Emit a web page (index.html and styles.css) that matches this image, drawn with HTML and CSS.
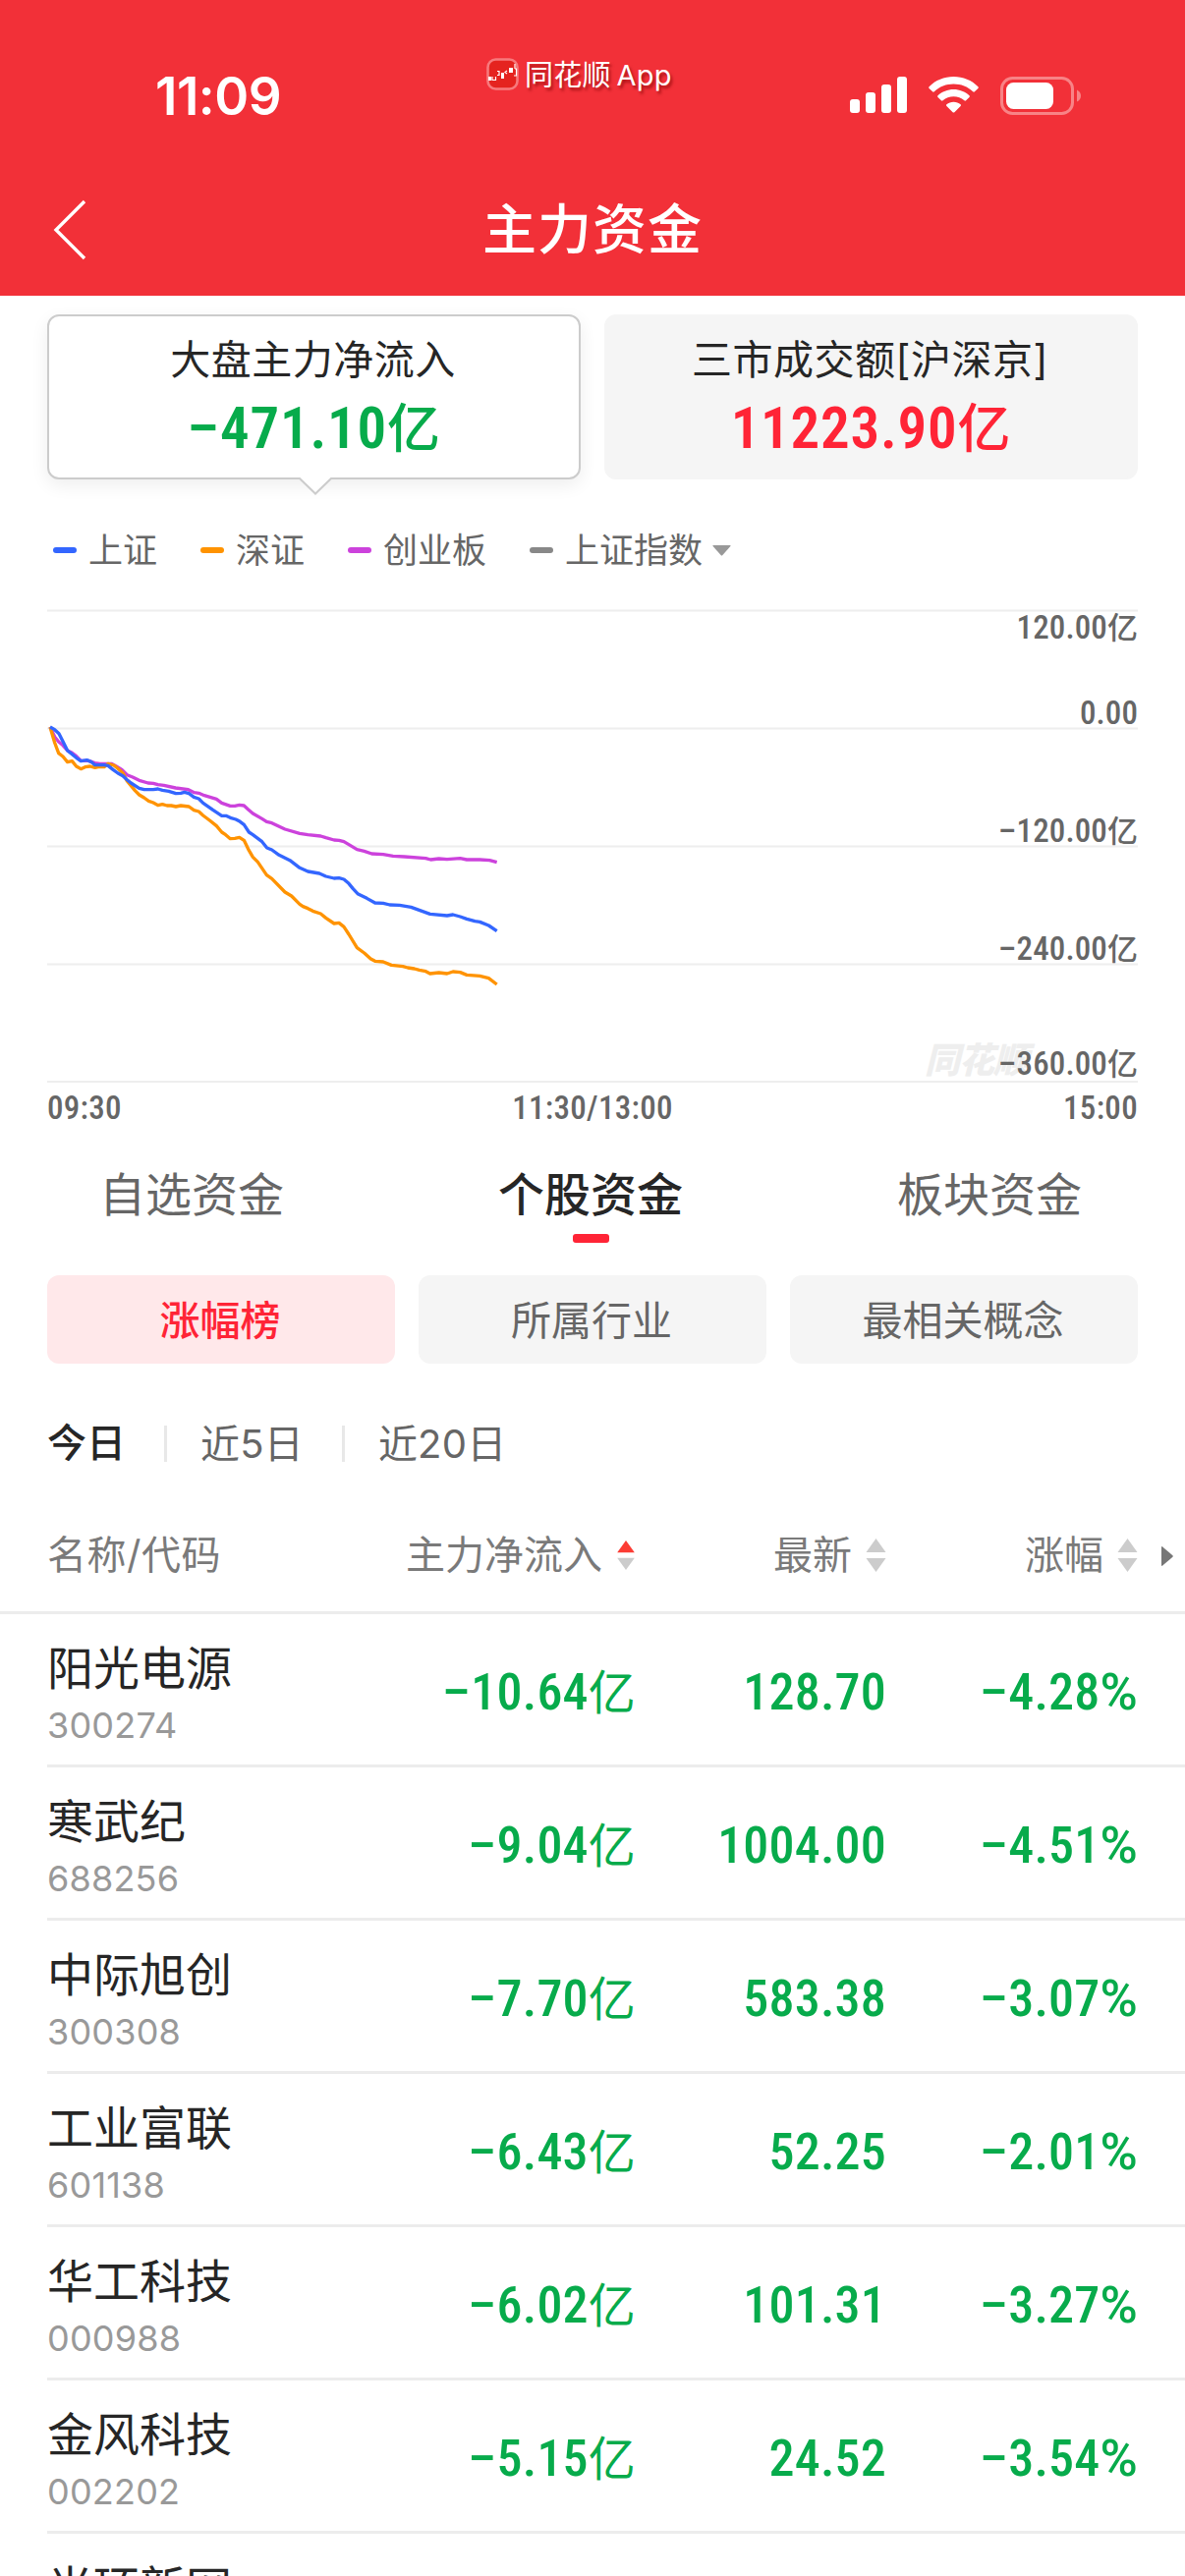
FILE: index.html
```html
<!DOCTYPE html>
<html lang="zh-CN">
<head>
  <meta charset="UTF-8">
  <meta name="viewport" content="width=device-width, initial-scale=1">
  <title>主力资金</title>
  <link rel="stylesheet" href="styles.css">
</head>
<body>
<header class="header">
  <div class="status">
    <span class="time">11:09</span>
    <div class="app-tag">
      <svg width="33" height="33" viewBox="0 0 33 33">
        <rect x="1.5" y="1.5" width="30" height="30" rx="8" fill="#e5231f" stroke="#f7797c" stroke-width="2.6"/>
        <path d="M2 19h3v4H2zM15 15h3v6h-3zM23 10h4v5h-4z" fill="#fff"/>
        <path d="M6 19v3.500h3.500v-3.500M11 13.500h2v4h-2M21 13l-2 1.500 2 1.500M29 6v5M29 11h1.500v7H28" fill="none" stroke="#fff" stroke-width="1.200"/>
      </svg>
      <span>同花顺<i>App</i></span>
    </div>
    <div class="status-icons">
      <svg width="58" height="38" viewBox="0 0 58 38" fill="#fff">
        <rect x="0" y="23" width="10" height="14" rx="3"/>
        <rect x="16" y="16" width="10" height="21" rx="3"/>
        <rect x="32" y="8" width="10" height="29" rx="3"/>
        <rect x="48" y="0" width="10" height="37" rx="3"/>
      </svg>
      <svg class="wifi" width="51" height="38" viewBox="0 0 51 38" fill="#fff">
        <path d="M25.500 0C16 0 7 3.700.600 10.200q-.8.900 0 1.700l3.500 3.400q.8.800 1.700 0C11 10.200 18 7.500 25.500 7.500s14.500 2.700 19.700 7.800q.9.800 1.700 0l3.500-3.400q.8-.8 0-1.700C44 3.700 35 0 25.500 0z"/>
        <path d="M25.500 13c-6 0-11.700 2.300-16 6.200q-.9.800 0 1.700l3.400 3.400q.9.800 1.700 0c3-2.600 6.800-4.100 10.900-4.100s7.900 1.500 10.900 4.100q.8.800 1.700 0l3.400-3.400q.9-.9 0-1.700c-4.300-3.900-10-6.200-16-6.200z"/>
        <path d="M25.500 25.700c-2.700 0-5.200.9-7.100 2.500q-.9.800 0 1.700l6.200 6.300q.9.800 1.800 0l6.200-6.300q.9-.9 0-1.700c-1.900-1.600-4.400-2.500-7.100-2.500z"/>
      </svg>
      <svg width="82" height="39" viewBox="0 0 82 39">
        <rect x="1.500" y="1.500" width="72" height="36" rx="11" fill="none" stroke="#f88386" stroke-width="3"/>
        <rect x="6" y="6" width="48" height="27" rx="7.500" fill="#fff"/>
        <path d="M78 13.500q4 2 4 6t-4 6z" fill="#f88386"/>
      </svg>
    </div>
  </div>
  <div class="nav">
    <svg class="back" width="34" height="62" viewBox="0 0 34 62"><path d="M32 2L3 31l29 29" fill="none" stroke="#fff" stroke-width="3.400"/></svg>
    <h1>主力资金</h1>
  </div>
</header>

<section class="cards">
  <div class="card active">
    <div class="card-title">大盘主力净流入</div>
    <div class="card-value green"><i>−</i>471.10<em>亿</em></div>
    <svg class="pointer" width="34" height="18" viewBox="0 0 34 18"><path d="M0 0L17 16.500 34 0" fill="#fff" stroke="#ccc" stroke-width="2"/></svg>
  </div>
  <div class="card">
    <div class="card-title">三市成交额[沪深京]</div>
    <div class="card-value red">11223.90<em>亿</em></div>
  </div>
</section>

<div class="legend">
  <span class="item blue"><b>上证</b></span>
  <span class="item orange"><b>深证</b></span>
  <span class="item purple"><b>创业板</b></span>
  <span class="item gray"><b>上证指数</b></span>
  <svg class="caret" width="19" height="11" viewBox="0 0 19 11"><path d="M1 0h17q1 0 .4 1l-8 9q-.9 1-1.800 0l-8-9Q0 0 1 0z" fill="#999"/></svg>
</div>

<section class="chart">
  <!-- 三条资金曲线 -->
  <svg width="1110" height="482" viewBox="54 60 3330 1446">
    <path class="grid" d="M54 64.500H3384M54 424.500H3384M54 784.500H3384M54 1144.500H3384M54 1503H3384"/>
    <polyline stroke="#cc42dc" points="63,420 77,450 89,465 100,474 116,492 130,499 143,509 157,523 180,523 200,530 215,532 250,532 265,540 282,550 298,566 315,573 335,583 362,591 378,592 392,596 410,598 446,606 485,611 503,620 517,622 534,629 571,640 587,652 613,661 627,661 641,658 655,660 668,672 682,684 710,700 724,709 740,713 780,732 825,745 850,749 889,753 905,758 930,765 945,766 960,770 975,779 1000,794 1022,799 1045,807 1080,809 1110,814 1145,816 1210,821 1225,825 1250,822 1275,824 1315,821 1335,825 1375,825 1405,827 1427,833"/>
    <polyline stroke="#ff9300" points="63,420 77,468 89,500 102,510 116,527 130,524 143,540 157,548 170,542 185,540 200,544 210,542 228,542 240,532 258,537 270,547 285,560 298,585 322,614 335,627 350,636 364,646 378,651 392,659 406,656 420,660 433,660 447,663 462,660 487,663 502,674 517,678 530,690 550,705 571,722 587,741 599,749 613,761 627,760 641,757 655,766 668,793 682,817 697,832 724,872 740,883 780,924 800,936 825,961 835,968 850,974 865,982 889,990 905,1003 930,1020 945,1018 960,1030 975,1053 1000,1094 1022,1110 1042,1128 1055,1135 1080,1137 1105,1147 1140,1151 1155,1155 1175,1158 1190,1162 1210,1166 1223,1173 1250,1170 1275,1173 1293,1167 1315,1169 1335,1177 1375,1180 1402,1187 1427,1206"/>
    <polyline stroke="#3366ff" points="63,420 77,428 90,440 103,466 116,492 130,503 143,514 157,524 175,521 188,526 200,536 228,536 240,538 255,550 270,561 285,569 298,581 310,591 335,607 350,611 378,611 392,609 406,613 425,616 447,623 462,622 473,619 487,623 502,634 517,639 530,652 560,673 587,691 600,691 613,697 630,702 643,709 655,718 670,741 682,749 710,770 725,789 740,795 762,811 795,827 825,850 850,861 885,867 905,876 930,882 945,881 960,885 975,898 988,914 1002,929 1030,943 1055,957 1080,958 1100,963 1130,964 1165,970 1223,991 1275,996 1293,993 1315,999 1335,1006 1360,1013 1375,1015 1402,1026 1427,1043"/>
  </svg>
  <div class="watermark">同花顺</div>
  <div class="axis-y">
    <span>120.00<em>亿</em></span>
    <span>0.00</span>
    <span><i>−</i>120.00<em>亿</em></span>
    <span><i>−</i>240.00<em>亿</em></span>
    <span><i>−</i>360.00<em>亿</em></span>
  </div>
</section>
<div class="axis-x"><span>09:30</span><span>11:30/13:00</span><span>15:00</span></div>

<nav class="tabs">
  <span>自选资金</span>
  <span class="on">个股资金</span>
  <span>板块资金</span>
</nav>

<div class="filters">
  <span class="on">涨幅榜</span>
  <span>所属行业</span>
  <span>最相关概念</span>
</div>

<div class="periods">
  <span class="on">今日</span>
  <span>近5日</span>
  <span>近20日</span>
</div>

<div class="thead">
  <span>名称/代码</span>
  <span class="col">主力净流入<svg class="sort small" viewBox="0 0 20 34"><path d="M10 0l10 14H0z" fill="#fc3c34"/><path d="M10 34L0 20h20z" fill="#ccc"/></svg></span>
  <span class="col">最新<svg class="sort" viewBox="0 0 20 34"><path d="M10 0l10 14H0z" fill="#ccc"/><path d="M10 34L0 20h20z" fill="#ccc"/></svg></span>
  <span class="col">涨幅<svg class="sort" viewBox="0 0 20 34"><path d="M10 0l10 14H0z" fill="#ccc"/><path d="M10 34L0 20h20z" fill="#ccc"/></svg></span>
  <svg class="more" width="12" height="20" viewBox="0 0 12 20"><path d="M0 1q0-1.500 1.200-.6l10 8.500q1.200 1.100 0 2.200l-10 8.500Q0 20.500 0 19z" fill="#777"/></svg>
</div>

<main class="list">
  <div class="row">
    <div class="stock"><p class="name">阳光电源</p><p class="code">300274</p></div>
    <span class="num"><i>−</i>10.64<em>亿</em></span><span class="num">128.70</span><span class="num"><i>−</i>4.28<i>%</i></span>
  </div>
  <div class="row">
    <div class="stock"><p class="name">寒武纪</p><p class="code">688256</p></div>
    <span class="num"><i>−</i>9.04<em>亿</em></span><span class="num">1004.00</span><span class="num"><i>−</i>4.51<i>%</i></span>
  </div>
  <div class="row">
    <div class="stock"><p class="name">中际旭创</p><p class="code">300308</p></div>
    <span class="num"><i>−</i>7.70<em>亿</em></span><span class="num">583.38</span><span class="num"><i>−</i>3.07<i>%</i></span>
  </div>
  <div class="row">
    <div class="stock"><p class="name">工业富联</p><p class="code">601138</p></div>
    <span class="num"><i>−</i>6.43<em>亿</em></span><span class="num">52.25</span><span class="num"><i>−</i>2.01<i>%</i></span>
  </div>
  <div class="row">
    <div class="stock"><p class="name">华工科技</p><p class="code">000988</p></div>
    <span class="num"><i>−</i>6.02<em>亿</em></span><span class="num">101.31</span><span class="num"><i>−</i>3.27<i>%</i></span>
  </div>
  <div class="row">
    <div class="stock"><p class="name">金风科技</p><p class="code">002202</p></div>
    <span class="num"><i>−</i>5.15<em>亿</em></span><span class="num">24.52</span><span class="num"><i>−</i>3.54<i>%</i></span>
  </div>
  <div class="row">
    <div class="stock"><p class="name">光环新网</p></div>
  </div>
</main>
</body>
</html>
```
FILE: styles.css
```css
* {
  box-sizing: border-box;
}

body {
  margin: 0;
  height: 2622px;
  overflow: hidden;
  background: #fff;
  color: #262626;
  font-family: Inter, "Noto Sans CJK SC", sans-serif;
}

h1, p {
  margin: 0;
}

em, i {
  font-style: normal;
}

.header {
  height: 301px;
  background: #f23038;
  color: #fff;
}

/* 状态栏 */
.status {
  height: 170px;
  display: grid;
  grid-template-columns: 495px 1fr 341px;
  align-items: start;
}

.time {
  padding: 67px 0 0 158px;
  font-size: 53px;
  line-height: 62px;
  font-weight: 600;
  letter-spacing: -0.5px;
}

.app-tag {
  display: flex;
  align-items: center;
  gap: 6px;
  padding-top: 56px;
  font-size: 29px;
  line-height: 36px;
  text-shadow: 2px 3px 3px rgba(120, 0, 0, 0.6);
}

.app-tag span {
  padding-top: 3px;
  letter-spacing: 0.2px;
}

.app-tag i {
  margin-left: 6px;
}

.status-icons {
  display: flex;
  gap: 22px;
  padding-top: 78px;
}

.nav {
  height: 131px;
  position: relative;
  text-align: center;
}

.back {
  position: absolute;
  left: 54px;
  top: 33px;
}

.nav h1 {
  font-size: 55px;
  line-height: 126px;
  font-weight: 500;
  letter-spacing: 1px;
}

/* 顶部两张卡片 */
.cards {
  display: grid;
  grid-template-columns: 1fr 1fr;
  gap: 24px;
  padding: 19px 48px 0;
}

.card {
  position: relative;
  height: 168px;
  border-radius: 12px;
  border: 2px solid #f5f5f5;
  background: #f5f5f5;
  text-align: center;
}

.card.active {
  background: #fff;
  border-color: #ccc;
  box-shadow: 0 6px 18px rgba(0, 0, 0, 0.07);
}

.pointer {
  position: absolute;
  left: 254px;
  bottom: -18px;
}

.card-title {
  padding: 14px 2px 0 0;
  font-size: 41px;
  line-height: 60px;
  letter-spacing: 0.5px;
}

.card-value {
  font-family: Roboto, "Noto Sans CJK SC", sans-serif;
  font-size: 59px;
  font-stretch: 87%;
  line-height: 80px;
  font-weight: 600;
  letter-spacing: 0.8px;
}

.card-value em {
  font-size: 54px;
  font-weight: 500;
}

/* 负号和百分号比数字略宽 */
.card-value i, .axis-y i, .num i {
  font-stretch: 100%;
}

.green {
  color: #07ab4b;
}

.red {
  color: #ff2436;
}

.legend {
  display: flex;
  align-items: center;
  height: 60px;
  margin-top: 42px;
  padding-left: 54px;
  font-size: 35px;
  color: #666;
}

.item {
  display: flex;
  align-items: center;
  margin-right: 44px;
}

.item b {
  font-weight: 400;
  padding-bottom: 5px;
}

.item::before {
  content: "";
  width: 24px;
  height: 6px;
  margin-right: 12px;
  border-radius: 3px;
  background: #888;
}

.blue::before {
  background: #3366ff;
}

.orange::before {
  background: #ff9300;
}

.purple::before {
  background: #cc42dc;
}

.item.gray {
  margin-right: 10px;
}

/* 分时图 */
.chart {
  position: relative;
  height: 482px;
  margin: 30px 48px 0;
}

.chart > svg {
  display: block;
}

.grid {
  stroke: #eee;
  stroke-width: 6;
}

polyline {
  fill: none;
  stroke-width: 10;
  stroke-linejoin: round;
}

.watermark {
  position: absolute;
  left: 893px;
  top: 439px;
  font-size: 36px;
  line-height: 40px;
  font-weight: 900;
  font-style: italic;
  letter-spacing: -1px;
  color: #eee;
}

.axis-y {
  position: absolute;
  inset: 0 0 0 auto;
  text-align: right;
}

.axis-y span {
  display: block;
  height: 120px;
  line-height: 35px;
}

.axis-y span:first-child {
  height: 88px;
  padding-top: 1px;
}

.axis-y span:nth-child(4) {
  height: 117px;
}

.axis-y, .axis-x {
  font-family: Roboto, "Noto Sans CJK SC", sans-serif;
  font-size: 33px;
  font-stretch: 87%;
  font-weight: 460;
  letter-spacing: 0.1px;
  color: #666;
}

.axis-y em {
  font-size: 31px;
}

.axis-x {
  display: flex;
  justify-content: space-between;
  height: 45px;
  margin: 0 48px;
  padding-top: 6px;
  line-height: 40px;
  letter-spacing: 0.3px;
}

.tabs {
  display: grid;
  grid-template-columns: repeat(3, 406px);
  margin-left: -8px;
  padding-top: 35px;
  text-align: center;
  font-size: 47px;
  line-height: 68px;
  color: #666;
}

.tabs .on {
  color: #262626;
  font-weight: 500;
}

.tabs .on::after {
  content: "";
  display: block;
  width: 37px;
  height: 9px;
  margin: 6px auto 0;
  border-radius: 3px;
  background: #ff2436;
}

.filters {
  display: grid;
  grid-template-columns: repeat(3, 1fr);
  gap: 24px;
  padding: 33px 48px 0;
  text-align: center;
  font-size: 41px;
  line-height: 92px;
  color: #666;
}

.filters span {
  height: 90px;
  padding-right: 2px;
  border-radius: 12px;
  background: #f5f5f5;
}

.filters .on {
  color: #ff2436;
  font-weight: 500;
  background: #ffe8ea;
}

.periods {
  display: flex;
  align-items: center;
  height: 60px;
  margin: 51px 0 0 48px;
  font-size: 40px;
  color: #666;
}

.periods span + span {
  margin-left: 39px;
  padding-left: 34px;
  border-left: 3px solid #e8e8e8;
  line-height: 37px;
  letter-spacing: 0.2px;
}

.periods .on {
  color: #262626;
  font-weight: 500;
  line-height: 58px;
}

/* 表格列宽与数据行一致 */
.thead, .row {
  display: grid;
  grid-template-columns: 345px 254px 255px 256px;
  align-items: center;
}

.thead {
  position: relative;
  height: 144px;
  padding: 27px 0 0 48px;
  border-bottom: 3px solid #ececec;
  font-size: 40px;
  letter-spacing: 0.5px;
  color: #7a7a7a;
}

.thead > span {
  line-height: 56px;
}

.thead .col {
  letter-spacing: 0;
}

.col {
  display: flex;
  align-items: center;
  justify-content: flex-end;
}

.sort {
  width: 21px;
  height: 34px;
  margin-left: 14px;
}

.sort.small {
  width: 18px;
  height: 30px;
  margin: 0 1px 0 15px;
}

.more {
  position: absolute;
  right: 12px;
  top: 75px;
}

.row {
  height: 156px;
  margin-left: 48px;
  border-bottom: 3px solid #ececec;
}

.stock {
  align-self: start;
  padding-top: 25px;
}

.name {
  font-size: 47px;
  line-height: 60px;
}

.code {
  padding-top: 1px;
  font-size: 36px;
  line-height: 54px;
  letter-spacing: 0.2px;
  color: #999;
}

.num {
  padding-top: 6px;
  text-align: right;
  font-family: Roboto, "Noto Sans CJK SC", sans-serif;
  font-size: 52px;
  font-stretch: 87%;
  line-height: 70px;
  font-weight: 550;
  letter-spacing: 0.2px;
  color: #07ab4b;
}

.num em {
  font-size: 48px;
  font-weight: 400;
  line-height: 1;
}
```
